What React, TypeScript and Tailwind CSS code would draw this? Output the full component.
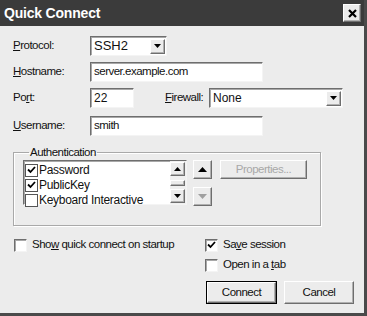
import React from "react";

const raised =
  "bg-[#ececec] border border-t-white border-l-white border-b-[#6e6e6e] border-r-[#6e6e6e] shadow-[inset_-1px_-1px_0_#b0b0b0]";
const sunken =
  "bg-white border border-t-[#6e6e6e] border-l-[#6e6e6e] border-b-[#f4f4f4] border-r-[#f4f4f4] shadow-[inset_1px_1px_0_#a8a8a8]";

function Tri({ up, color = "#000" }: { up?: boolean; color?: string }) {
  return (
    <svg width="9" height="5" viewBox="0 0 9 5">
      {up ? (
        <polygon points="0,5 9,5 4.5,0" fill={color} />
      ) : (
        <polygon points="0,0 9,0 4.5,5" fill={color} />
      )}
    </svg>
  );
}

function SmallTri({ up }: { up?: boolean }) {
  return (
    <svg width="7" height="4" viewBox="0 0 7 4">
      {up ? <polygon points="0,4 7,4 3.5,0" fill="#000" /> : <polygon points="0,0 7,0 3.5,4" fill="#000" />}
    </svg>
  );
}

function Check({ checked, flat }: { checked?: boolean; flat?: boolean }) {
  return (
    <div
      className={`w-[13px] h-[13px] shrink-0 flex items-center justify-center ${
        flat ? "bg-white border border-[#555]" : sunken
      }`}
    >
      {checked && (
        <svg width="9" height="8" viewBox="0 0 9 8">
          <path d="M1 3.5 L3.5 6 L8 1" stroke="#000" strokeWidth="1.8" fill="none" />
        </svg>
      )}
    </div>
  );
}

function Label({ children }: { children: React.ReactNode }) {
  return <div className="w-[90px] pl-[13px] shrink-0">{children}</div>;
}

export default function App() {
  return (
    <div
      className="w-[367px] h-[316px] bg-[#ececec] flex flex-col border-r-[3px] border-b-[3px] border-r-[#4a4a4a] border-b-[#4a4a4a] text-[11.5px] tracking-[-0.5px] text-[#111] overflow-hidden"
      style={{ fontFamily: '"Liberation Sans", Arial, sans-serif' }}
    >
      {/* Title bar */}
      <div className="h-[26px] bg-[#3b3b3b] flex items-center justify-between pl-[4px] pr-[3px] shrink-0">
        <span className="text-white font-bold text-[14px] tracking-[-0.2px]">Quick Connect</span>
        <div className={`w-[18px] h-[18px] flex items-center justify-center ${raised}`}>
          <svg width="9" height="9" viewBox="0 0 9 9">
            <path d="M1 1 L8 8 M8 1 L1 8" stroke="#000" strokeWidth="2.2" />
          </svg>
        </div>
      </div>

      {/* Body */}
      <div className="flex flex-col pt-[10px]">
        {/* Protocol */}
        <div className="flex items-center h-[20px]">
          <Label>
            <span className="underline">P</span>rotocol:
          </Label>
          <div className={`w-[77px] h-[20px] flex items-center justify-between pl-[3px] pr-[1px] ${sunken}`}>
            <span className="text-[13px] tracking-[0px]">SSH2</span>
            <div className={`w-[15px] h-[15px] flex items-center justify-center ${raised}`}>
              <SmallTri />
            </div>
          </div>
        </div>

        {/* Hostname */}
        <div className="flex items-center h-[20px] mt-[6px]">
          <Label>
            <span className="underline">H</span>ostname:
          </Label>
          <div className={`w-[173px] h-[20px] flex items-center pl-[3px] ${sunken}`}>
            server.example.com
          </div>
        </div>

        {/* Port / Firewall */}
        <div className="flex items-center h-[20px] mt-[6px]">
          <Label>
            Po<span className="underline">r</span>t:
          </Label>
          <div className={`w-[44px] h-[20px] flex items-center pl-[3px] text-[12px] tracking-[0px] ${sunken}`}>22</div>
          <div className="w-[75px] pl-[31px] shrink-0">
            <span className="underline">F</span>irewall:
          </div>
          <div className={`w-[134px] h-[20px] flex items-center justify-between pl-[3px] pr-[1px] ${sunken}`}>
            <span className="text-[12px] tracking-[0px]">None</span>
            <div className={`w-[15px] h-[15px] flex items-center justify-center ${raised}`}>
              <SmallTri />
            </div>
          </div>
        </div>

        {/* Username */}
        <div className="flex items-center h-[20px] mt-[8px]">
          <Label>
            <span className="underline">U</span>sername:
          </Label>
          <div className={`w-[173px] h-[20px] flex items-center pl-[3px] ${sunken}`}>smith</div>
        </div>

        {/* Authentication group */}
        <fieldset className="ml-[13px] mt-[9px] w-[308px] h-[81px] border border-[#a9a9a9] shadow-[1px_1px_0_#fff,inset_1px_1px_0_#fff] pl-[9px] pt-[1px]">
          <legend className="ml-[6px] px-[1px] leading-[14px]">Authentication</legend>
          <div className="flex items-start">
            <div className={`w-[164px] h-[45px] flex ${sunken}`}>
              <div className="flex-1 flex flex-col pl-[1px] pt-[2px] leading-[14px] text-[12px] tracking-[-0.3px]">
                <div className="flex items-center gap-[1px] h-[14px]">
                  <Check checked flat />
                  <span>Password</span>
                </div>
                <div className="flex items-center gap-[1px] h-[14px] mt-[1px]">
                  <Check checked flat />
                  <span>PublicKey</span>
                </div>
                <div className="flex items-center gap-[1px] h-[14px] mt-[1px]">
                  <Check flat />
                  <span>Keyboard Interactive</span>
                </div>
              </div>
              <div className="w-[16px] flex flex-col justify-between bg-[#f0f0f0] py-[1px] pr-[1px]">
                <div className={`w-[15px] h-[14px] flex items-center justify-center ${raised}`}>
                  <SmallTri up />
                </div>
                <div className={`w-[15px] h-[6px] ${raised}`} />
                <div className={`w-[15px] h-[14px] flex items-center justify-center ${raised}`}>
                  <SmallTri />
                </div>
              </div>
            </div>
            <div className="flex flex-col ml-[6px] gap-[8px]">
              <div className={`w-[19px] h-[19px] flex items-center justify-center ${raised}`}>
                <Tri up />
              </div>
              <div className={`w-[19px] h-[19px] flex items-center justify-center ${raised}`}>
                <Tri color="#a0a0a0" />
              </div>
            </div>
            <div className={`ml-[8px] w-[87px] h-[19px] flex items-center justify-center text-[#a8a8a8] ${raised}`}>
              Properties...
            </div>
          </div>
        </fieldset>

        {/* Options */}
        <div className="flex mt-[12px]">
          <div className="flex items-center gap-[4px] pl-[14px] w-[205px] h-[14px]">
            <Check />
            <span className="ml-[1px]">
              Sho<span className="underline">w</span> quick connect on startup
            </span>
          </div>
          <div className="flex flex-col">
            <div className="flex items-center gap-[4px] h-[14px]">
              <Check checked />
              <span className="ml-[1px]">
                Sa<span className="underline">v</span>e session
              </span>
            </div>
            <div className="flex items-center gap-[4px] h-[14px] mt-[6px]">
              <Check />
              <span className="ml-[1px]">
                Open in a <span className="underline">t</span>ab
              </span>
            </div>
          </div>
        </div>

        {/* Buttons */}
        <div className="flex justify-end gap-[7px] pr-[10px] mt-[9px]">
          <div className="w-[71px] h-[23px] border border-black">
            <div className={`w-full h-full flex items-center justify-center ${raised}`}>Connect</div>
          </div>
          <div className={`w-[70px] h-[23px] flex items-center justify-center ${raised}`}>Cancel</div>
        </div>
      </div>
    </div>
  );
}
